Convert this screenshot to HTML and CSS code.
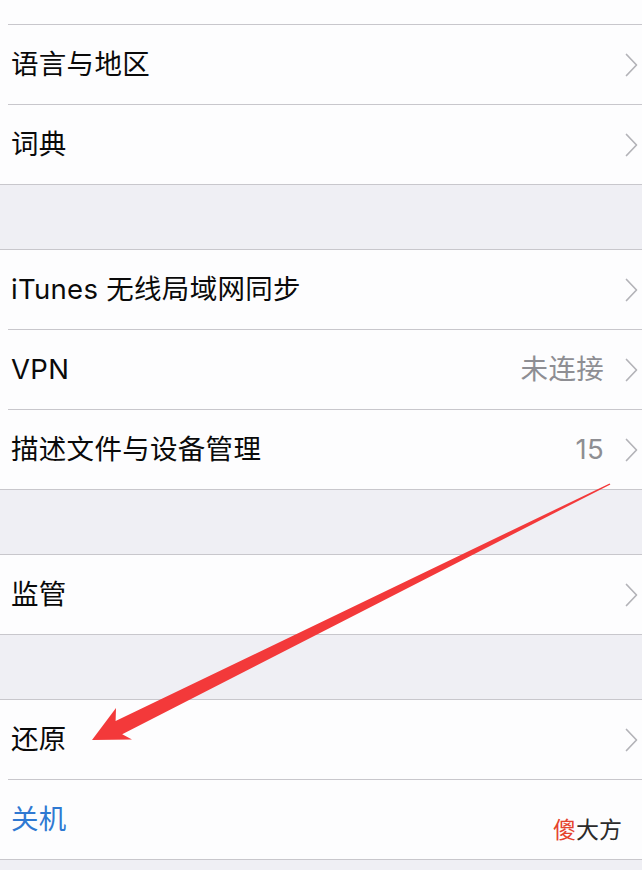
FILE: index.html
```html
<!DOCTYPE html>
<html lang="zh-CN">
<head>
<meta charset="utf-8">
<title>设置</title>
<link rel="stylesheet" href="styles.css">
</head>
<body>
<div class="page">
  <section class="group group-first">
    <div class="row row-partial"></div>
    <div class="row"><span class="label">语言与地区</span><span class="chev"><svg viewBox="0 0 13 24" width="13" height="24"><path d="M1.5 1.5 L11.5 12 L1.5 22.5" /></svg></span></div>
    <div class="row"><span class="label">词典</span><span class="chev"><svg viewBox="0 0 13 24" width="13" height="24"><path d="M1.5 1.5 L11.5 12 L1.5 22.5" /></svg></span></div>
  </section>

  <section class="group">
    <div class="row"><span class="label">iTunes 无线局域网同步</span><span class="chev"><svg viewBox="0 0 13 24" width="13" height="24"><path d="M1.5 1.5 L11.5 12 L1.5 22.5" /></svg></span></div>
    <div class="row"><span class="label">VPN</span><span class="value">未连接</span><span class="chev"><svg viewBox="0 0 13 24" width="13" height="24"><path d="M1.5 1.5 L11.5 12 L1.5 22.5" /></svg></span></div>
    <div class="row"><span class="label">描述文件与设备管理</span><span class="value">15</span><span class="chev"><svg viewBox="0 0 13 24" width="13" height="24"><path d="M1.5 1.5 L11.5 12 L1.5 22.5" /></svg></span></div>
  </section>

  <section class="group">
    <div class="row"><span class="label">监管</span><span class="chev"><svg viewBox="0 0 13 24" width="13" height="24"><path d="M1.5 1.5 L11.5 12 L1.5 22.5" /></svg></span></div>
  </section>

  <section class="group">
    <div class="row"><span class="label">还原</span><span class="chev"><svg viewBox="0 0 13 24" width="13" height="24"><path d="M1.5 1.5 L11.5 12 L1.5 22.5" /></svg></span></div>
    <div class="row"><span class="label label-blue">关机</span></div>
  </section>

  <svg class="arrow" viewBox="0 0 642 870" width="642" height="870">
    <polygon points="610.4,484.4 122.2,734.3 132,739.5 92,740 116,708 115.6,721.1 609.6,483.4" />
  </svg>

  <div class="watermark"><span class="wm-red">傻</span>大方</div>
</div>
</body>
</html>
```

FILE: styles.css
```css
* { box-sizing: border-box; }

html, body {
  margin: 0;
  padding: 0;
}

body {
  background: #efeff4;
  font-family: "Inter", "Noto Sans CJK SC", "Noto Sans", sans-serif;
  color: #0a0a0a;
}

.page {
  position: relative;
  width: 642px;
  height: 870px;
  overflow: hidden;
}

.group {
  background: #fdfdfe;
  border-top: 1px solid #c8c7cc;
  border-bottom: 1px solid #c8c7cc;
  margin-top: 64px;
}

.group-first {
  margin-top: 0;
  border-top: none;
}

.row {
  display: flex;
  align-items: center;
  height: 80px;
  margin-left: 8px;
  padding-left: 3px;
  padding-right: 4px;
  border-bottom: 1px solid #c8c7cc;
}

.row:last-child {
  height: 79px;
  border-bottom: none;
}

.row-partial {
  height: 25px;
}

.label {
  flex: 1;
  font-size: 27.5px;
  letter-spacing: 0.3px;
  line-height: 1;
  white-space: nowrap;
}

.label-blue {
  color: #2f79d2;
}

.value {
  font-size: 27.5px;
  line-height: 1;
  color: #8e8e93;
  margin-right: 21px;
  letter-spacing: 0.3px;
}

.chev {
  display: flex;
  width: 13px;
  height: 24px;
}

.chev path {
  fill: none;
  stroke: #b3b3b8;
  stroke-width: 1.7;
  stroke-linecap: round;
  stroke-linejoin: round;
}

.arrow {
  position: absolute;
  left: 0;
  top: 0;
  pointer-events: none;
}

.arrow polygon {
  fill: #f3393a;
}

.watermark {
  position: absolute;
  left: 553px;
  top: 817px;
  font-size: 23px;
  line-height: 1;
  color: #2b2b2b;
  font-family: "Noto Sans CJK SC", sans-serif;
}

.wm-red {
  color: #e5432d;
}
```
